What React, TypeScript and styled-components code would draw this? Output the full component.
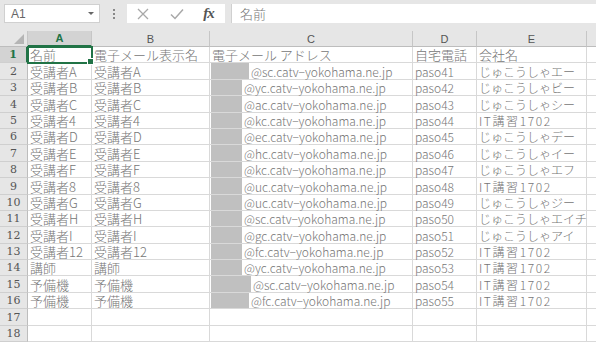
import styled, { createGlobalStyle } from 'styled-components';

const GlobalStyle = createGlobalStyle`
    body {
        margin: 0;
        background: #ffffff;
        font-family: "Noto Sans CJK JP", "Noto Sans", sans-serif;
    }
`;

const Screen = styled.div`
    width: 596px;
    height: 344px;
    overflow: hidden;
    background: #ffffff;
`;

const FormulaBar = styled.div`
    height: 31px;
    box-sizing: border-box;
    background: #e6e6e6;
    display: flex;
    align-items: flex-start;
    padding: 4px 0 0 4px;
`;

const NameBox = styled.div`
    width: 96px;
    height: 19px;
    box-sizing: border-box;
    background: #ffffff;
    border: 1px solid #d0d0d0;
    display: flex;
    align-items: center;
    justify-content: space-between;
    padding: 0 5px 0 6px;
    font-family: "Liberation Sans", sans-serif;
    font-size: 12px;
    color: #666;
`;

const Caret = styled.span`
    width: 0;
    height: 0;
    border-left: 3px solid transparent;
    border-right: 3px solid transparent;
    border-top: 3px solid #666;
`;

const Dots = styled.div`
    width: 27px;
    height: 19px;
    display: flex;
    flex-direction: column;
    align-items: center;
    justify-content: center;
    gap: 2px;
    span {
        width: 2px;
        height: 2px;
        background: #888;
    }
`;

const ButtonBox = styled.div`
    width: 98px;
    height: 19px;
    background: #ffffff;
    display: flex;
    align-items: center;
    justify-content: space-around;
    padding-right: 2px;
    box-sizing: border-box;
`;

const Fx = styled.span`
    font-family: "Liberation Serif", serif;
    font-style: italic;
    font-weight: bold;
    font-size: 15px;
    color: #555;
    letter-spacing: -1px;
`;

const FormulaInput = styled.div`
    flex: 1;
    height: 19px;
    margin-left: 6px;
    background: #ffffff;
    border-left: 1px solid #d0d0d0;
    display: flex;
    align-items: center;
    padding-left: 8px;
    font-size: 13px;
    font-weight: 300;
    color: #777;
`;

const Grid = styled.div`
    display: grid;
    grid-template-columns: 28px 64px 118px 203px 64px 110px 40px;
    grid-template-rows: 16px repeat(18, 16.4px);
`;

const Corner = styled.div`
    background: #e6e6e6;
    border-right: 1px solid #c6c6c6;
    border-bottom: 1px solid #bdbdbd;
    box-sizing: border-box;
    display: flex;
    align-items: flex-end;
    justify-content: flex-end;
    padding: 0 3px 2px 0;
`;

const ColHead = styled.div<{ active?: boolean }>`
    box-sizing: border-box;
    background: ${(p) => (p.active ? '#d3d3d3' : '#e6e6e6')};
    border-right: 1px solid #c6c6c6;
    border-bottom: ${(p) => (p.active ? '2px solid #217346' : '1px solid #bdbdbd')};
    display: flex;
    align-items: center;
    justify-content: center;
    font-family: "Liberation Sans", sans-serif;
    font-size: 11px;
    font-weight: ${(p) => (p.active ? 'bold' : 'normal')};
    color: ${(p) => (p.active ? '#217346' : '#555')};
`;

const RowHead = styled.div<{ active?: boolean }>`
    box-sizing: border-box;
    background: ${(p) => (p.active ? '#d3d3d3' : '#e6e6e6')};
    border-right: ${(p) => (p.active ? '2px solid #217346' : '1px solid #bdbdbd')};
    border-bottom: 1px solid #cfcfcf;
    display: flex;
    align-items: flex-end;
    justify-content: center;
    font-family: "DejaVu Serif", serif;
    font-size: 11px;
    line-height: 14px;
    font-weight: ${(p) => (p.active ? 'bold' : 'normal')};
    color: ${(p) => (p.active ? '#217346' : '#555')};
`;

const Cell = styled.div<{ size?: number; selected?: boolean }>`
    position: relative;
    box-sizing: border-box;
    border-right: 1px solid #d9d9d9;
    border-bottom: 1px solid #d9d9d9;
    ${(p) => p.selected && 'outline: 2px solid #217346; outline-offset: -1px; z-index: 1;'}
    display: flex;
    align-items: flex-end;
    padding-left: 2px;
    font-size: ${(p) => p.size ?? 13}px;
    font-weight: 300;
    line-height: 14px;
    color: #767676;
    white-space: nowrap;
    min-width: 0;
`;

const MailCell = styled(Cell)`
    padding-left: 1px;
    align-items: stretch;
`;

const Mask = styled.span`
    flex: none;
    background: #c0c0c0;
    margin-right: 2px;
`;

const MailText = styled.span`
    align-self: flex-end;
`;

const Spaced = styled.span`
    letter-spacing: 1.6px;
`;

const FillHandle = styled.span`
    position: absolute;
    right: -3px;
    bottom: -3px;
    width: 5px;
    height: 5px;
    background: #217346;
    border: 1px solid #fff;
    z-index: 2;
`;

const Line = styled.div`
    display: contents;
`;

const rows: [string, string, number, string, string, string][] = [
    ['受講者A', '受講者A', 38, '@sc', 'paso41', 'じゅこうしゃエー'],
    ['受講者B', '受講者B', 31, '@yc', 'paso42', 'じゅこうしゃビー'],
    ['受講者C', '受講者C', 31, '@ac', 'paso43', 'じゅこうしゃシー'],
    ['受講者4', '受講者4', 31, '@kc', 'paso44', 'IT講習1702'],
    ['受講者D', '受講者D', 31, '@ec', 'paso45', 'じゅこうしゃデー'],
    ['受講者E', '受講者E', 31, '@hc', 'paso46', 'じゅこうしゃイー'],
    ['受講者F', '受講者F', 31, '@kc', 'paso47', 'じゅこうしゃエフ'],
    ['受講者8', '受講者8', 31, '@uc', 'paso48', 'IT講習1702'],
    ['受講者G', '受講者G', 31, '@uc', 'paso49', 'じゅこうしゃジー'],
    ['受講者H', '受講者H', 31, '@sc', 'paso50', 'じゅこうしゃエイチ'],
    ['受講者I', '受講者I', 31, '@gc', 'paso51', 'じゅこうしゃアイ'],
    ['受講者12', '受講者12', 31, '@fc', 'paso52', 'IT講習1702'],
    ['講師', '講師', 31, '@yc', 'paso53', 'IT講習1702'],
    ['予備機', '予備機', 40, '@sc', 'paso54', 'IT講習1702'],
    ['予備機', '予備機', 38, '@fc', 'paso55', 'IT講習1702'],
];

const cols = ['A', 'B', 'C', 'D', 'E', ''];

function App() {
    return (
        <Screen>
            <GlobalStyle />
            <FormulaBar>
                <NameBox>
                    A1
                    <Caret />
                </NameBox>
                <Dots>
                    <span />
                    <span />
                    <span />
                </Dots>
                <ButtonBox>
                    <svg width="14" height="14" viewBox="0 0 14 14">
                        <path d="M2 2 L12 12 M12 2 L2 12" stroke="#a8a8a8" strokeWidth="1.3" fill="none" />
                    </svg>
                    <svg width="16" height="14" viewBox="0 0 16 14">
                        <path d="M2 7.5 L6 11.5 L14 2.5" stroke="#a8a8a8" strokeWidth="1.5" fill="none" />
                    </svg>
                    <Fx>fx</Fx>
                </ButtonBox>
                <FormulaInput>名前</FormulaInput>
            </FormulaBar>

            <Grid>
                <Corner>
                    <svg width="10" height="10" viewBox="0 0 10 10">
                        <path d="M10 0 L10 10 L0 10 Z" fill="#b5b5b5" />
                    </svg>
                </Corner>
                {cols.map((c, i) => (
                    <ColHead key={i} active={c === 'A'}>{c}</ColHead>
                ))}

                {/* 1行目 = 見出し */}
                <RowHead active>1</RowHead>
                <Cell selected>
                    名前
                    <FillHandle />
                </Cell>
                <Cell>電子メール表示名</Cell>
                <Cell>電子メール アドレス</Cell>
                <Cell>自宅電話</Cell>
                <Cell>会社名</Cell>
                <Cell />

                {rows.map((r, i) => (
                    <Line key={i}>
                        <RowHead>{i + 2}</RowHead>
                        <Cell>{r[0]}</Cell>
                        <Cell>{r[1]}</Cell>
                        <MailCell size={12}>
                            <Mask style={{ width: r[2] }} />
                            <MailText>{r[3]}.catv−yokohama.ne.jp</MailText>
                        </MailCell>
                        <Cell size={12}>{r[4]}</Cell>
                        <Cell size={12}>
                            {r[5].startsWith('IT') ? <Spaced>{r[5]}</Spaced> : r[5]}
                        </Cell>
                        <Cell />
                    </Line>
                ))}

                {[17, 18].map((n) => (
                    <Line key={n}>
                        <RowHead>{n}</RowHead>
                        {cols.map((_, j) => (
                            <Cell key={j} />
                        ))}
                    </Line>
                ))}
            </Grid>
        </Screen>
    );
}

export default App;
